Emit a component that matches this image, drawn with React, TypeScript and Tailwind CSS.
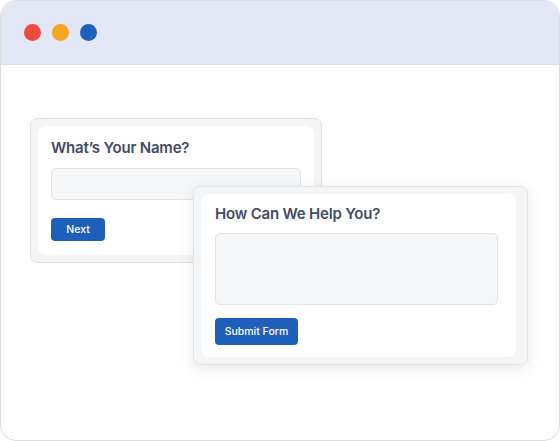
export default function App() {
  return (
    <div
      className="w-[560px] h-[441px] bg-white"
      style={{ fontFamily: "Inter, 'Noto Sans', sans-serif" }}
    >
      <div className="w-full h-full rounded-[16px] border border-[#dcdde0] overflow-hidden flex flex-col">
        {/* Window bar */}
        <div className="h-[64px] shrink-0 bg-[#e3e6f5] border-b border-[#dcdde3] flex items-center gap-[11px] pl-[23px]">
          <span className="w-[17px] h-[17px] rounded-full bg-[#ea4c3f]" />
          <span className="w-[17px] h-[17px] rounded-full bg-[#f6a623]" />
          <span className="w-[17px] h-[17px] rounded-full bg-[#1f5fbd]" />
        </div>

        {/* Canvas */}
        <div className="flex-1 pt-[53px] pl-[29px]">
          {/* Name card */}
          <div className="w-[292px] h-[145px] p-[7px] bg-[#f4f5f7] border border-[#dedfe2] rounded-[7px]">
            <div className="h-full bg-white rounded-[8px] pt-[12px] pl-[13px] pr-[12px]">
              <h2 className="text-[15px] leading-[20px] font-[560] text-[#434a68] tracking-[-0.2px]">
                What’s Your Name?
              </h2>
              <div className="mt-[10px] w-[250px] h-[32px] bg-[#f5f6f8] border border-[#e1e2e5] rounded-[5px]" />
              <button className="mt-[18px] w-[54px] h-[23px] rounded-[4px] bg-[#1e5fba] text-white text-[10.5px] font-medium">
                Next
              </button>
            </div>
          </div>

          {/* Help card */}
          <div className="relative mt-[-77px] ml-[163px] w-[335px] h-[179px] pt-[7px] pb-[7px] pl-[7px] pr-[11px] bg-[#f4f5f7] border border-[#e2e3e6] rounded-[7px] shadow-[0_4px_16px_rgba(0,0,0,0.09)]">
            <div className="h-full bg-white rounded-[8px] pt-[10px] px-[14px]">
              <h2 className="text-[15px] leading-[20px] font-[560] text-[#434a68] tracking-[-0.2px]">
                How Can We Help You?
              </h2>
              <div className="mt-[9px] w-[283px] h-[72px] bg-[#f5f6f8] border border-[#e1e2e5] rounded-[5px]" />
              <button className="mt-[13px] w-[83px] h-[27px] rounded-[4px] bg-[#1e5fba] text-white text-[10.5px] font-medium">
                Submit Form
              </button>
            </div>
          </div>
        </div>
      </div>
    </div>
  );
}
